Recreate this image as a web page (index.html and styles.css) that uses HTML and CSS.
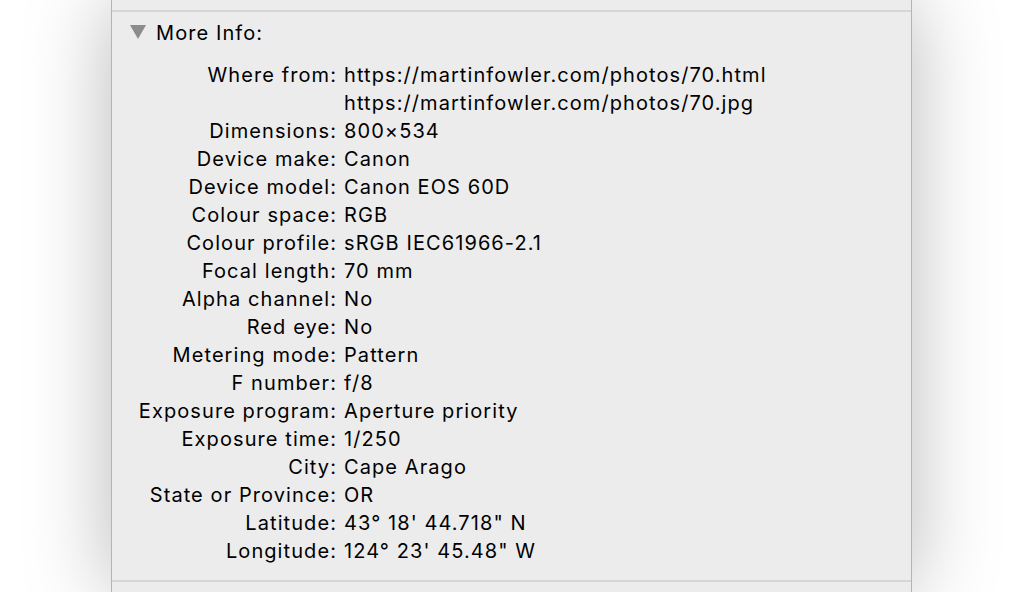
FILE: index.html
```html
<!DOCTYPE html>
<html>
<head>
<meta charset="utf-8">
<link rel="stylesheet" href="styles.css">
</head>
<body>
<div class="stage">
  <div class="panel">
    <div class="prev"></div>
    <div class="sep"></div>
    <div class="section">
      <div class="header">
        <svg class="tri" width="16" height="14" viewBox="0 0 16 14"><path d="M0 0 H16 L8 14 Z" fill="#8c8c8c"/></svg>
        <span>More Info:</span>
      </div>
      <div class="grid">
        <div class="k">Where from:</div><div class="v">https://martinfowler.com/photos/70.html<br>https://martinfowler.com/photos/70.jpg</div>
        <div class="k">Dimensions:</div><div class="v">800×534</div>
        <div class="k">Device make:</div><div class="v">Canon</div>
        <div class="k">Device model:</div><div class="v">Canon EOS 60D</div>
        <div class="k">Colour space:</div><div class="v">RGB</div>
        <div class="k">Colour profile:</div><div class="v">sRGB IEC61966-2.1</div>
        <div class="k">Focal length:</div><div class="v">70 mm</div>
        <div class="k">Alpha channel:</div><div class="v">No</div>
        <div class="k">Red eye:</div><div class="v">No</div>
        <div class="k">Metering mode:</div><div class="v">Pattern</div>
        <div class="k">F number:</div><div class="v">f/8</div>
        <div class="k">Exposure program:</div><div class="v">Aperture priority</div>
        <div class="k">Exposure time:</div><div class="v">1/250</div>
        <div class="k">City:</div><div class="v">Cape Arago</div>
        <div class="k">State or Province:</div><div class="v">OR</div>
        <div class="k">Latitude:</div><div class="v">43° 18' 44.718" N</div>
        <div class="k">Longitude:</div><div class="v">124° 23' 45.48" W</div>
      </div>
    </div>
    <div class="sep"></div>
    <div class="after"></div>
  </div>
</div>
</body>
</html>
```

FILE: styles.css
```css
html, body {
  margin: 0;
  padding: 0;
  height: 100%;
  overflow: hidden;
  background: #ffffff;
}
.stage {
  display: flex;
  padding-left: 111px;
  height: 592px;
  overflow: hidden;
}
.panel {
  width: 799px;
  background: #ececec;
  border-left: 1px solid #b4b4b4;
  border-right: 1px solid #b4b4b4;
  box-shadow: 0 0 80px rgba(0, 0, 0, 0.28);
  display: flex;
  flex-direction: column;
  font-family: Inter, "Noto Sans", sans-serif;
  font-size: 20px;
  letter-spacing: 1.08px;
  color: #000;
}
.prev {
  height: 10px;
}
.sep {
  height: 2px;
  background: #d6d6d6;
  flex-shrink: 0;
}
.section {
  padding: 7px 0 15px 0;
}
.header {
  display: flex;
  align-items: center;
  height: 28px;
  line-height: 28px;
  padding-left: 18px;
}
.tri {
  margin-right: 10px;
  margin-top: -2px;
}
.grid {
  margin-top: 14px;
  display: grid;
  grid-template-columns: 225px 1fr;
  column-gap: 7px;
  line-height: 28px;
}
.k {
  text-align: right;
  white-space: nowrap;
}
.v {
  white-space: nowrap;
}
.after {
  flex: 1;
}
```
